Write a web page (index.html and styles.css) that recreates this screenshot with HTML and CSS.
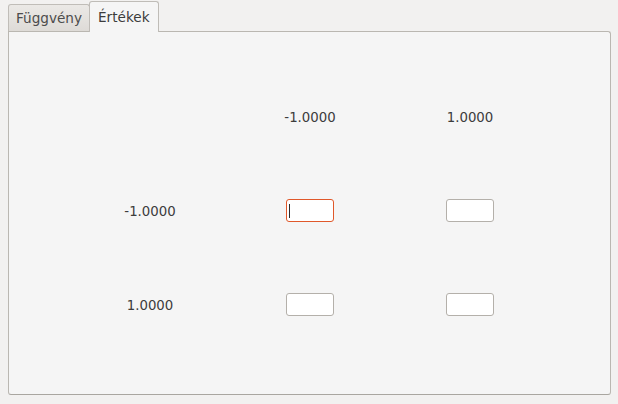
FILE: index.html
```html
<!DOCTYPE html>
<html>
<head>
<meta charset="utf-8">
<link rel="stylesheet" href="styles.css">
</head>
<body>
<div class="tabs">
  <div class="tab">Függvény</div>
  <div class="tab active">Értékek</div>
</div>
<div class="panel">
  <div class="grid">
    <div class="cell"></div>
    <div class="cell">-1.0000</div>
    <div class="cell">1.0000</div>
    <div class="cell">-1.0000</div>
    <div class="cell"><div class="input focus"><span class="caret"></span></div></div>
    <div class="cell"><div class="input"></div></div>
    <div class="cell">1.0000</div>
    <div class="cell"><div class="input"></div></div>
    <div class="cell"><div class="input"></div></div>
  </div>
</div>
</body>
</html>
```
FILE: styles.css
```css
html, body {
  margin: 0;
  padding: 0;
  background: #f2f1f0;
  width: 618px;
  height: 404px;
  overflow: hidden;
  font-family: "DejaVu Sans", sans-serif;
  font-size: 13.3px;
  color: #3c3c3c;
}
.tabs {
  display: flex;
  align-items: flex-end;
  padding-left: 8px;
  height: 31px;
  position: relative;
  z-index: 2;
}
.tab {
  box-sizing: border-box;
  height: 27px;
  padding: 0 7px 0 7px;
  line-height: 26px;
  border: 1px solid #c0bdb8;
  border-bottom: none;
  border-radius: 3px 3px 0 0;
  background: linear-gradient(#ebe9e6, #dedbd7);
  color: #4c4c4c;
  font-size: 13.6px;
}
.tab.active {
  height: 31px;
  line-height: 30px;
  background: #f5f5f5;
  border-color: #bfbcb7;
  margin-left: -1px;
  padding: 0 8px;
  color: #3c3c3c;
  position: relative;
  top: 1px;
}
.panel {
  box-sizing: border-box;
  margin: 0 7px 0 8px;
  height: 364px;
  background: #f5f5f5;
  border: 1px solid #bab7b1;
  border-bottom-color: #a9a6a0;
  border-radius: 0 3px 3px 3px;
  padding: 38px 0 0 61px;
}
.grid {
  display: grid;
  grid-template-columns: 160px 160px 160px;
  grid-template-rows: 94px 94px 94px;
}
.cell {
  display: flex;
  align-items: center;
  justify-content: center;
}
.input {
  box-sizing: border-box;
  width: 48px;
  height: 23px;
  margin-top: -2px;
  background: #fff;
  border: 1px solid #b4b0aa;
  border-radius: 3px;
  position: relative;
}
.input.focus {
  border-color: #e0582a;
}
.caret {
  position: absolute;
  left: 2px;
  top: 4px;
  width: 1px;
  height: 14px;
  background: #2c2c2c;
}
```
